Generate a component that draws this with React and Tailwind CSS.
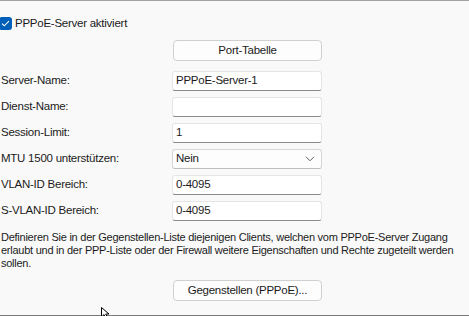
import React from 'react';

const rows = [
  { label: 'Server-Name:', value: 'PPPoE-Server-1' },
  { label: 'Dienst-Name:', value: '' },
  { label: 'Session-Limit:', value: '1' },
  { label: 'MTU 1500 unterstützen:', value: 'Nein', select: true },
  { label: 'VLAN-ID Bereich:', value: '0-4095' },
  { label: 'S-VLAN-ID Bereich:', value: '0-4095' },
];

function Field({ value, select }) {
  if (select) {
    return (
      <div className="w-[150px] h-[20px] flex items-center justify-between pl-[3px] pr-[6px] bg-[#fdfdfd] border border-[#d6d6d6] border-b-[#bdbdbd] rounded-[3px]">
        <span>{value}</span>
        <svg width="10" height="6" viewBox="0 0 10 6" fill="none" stroke="#606060" strokeWidth="1">
          <path d="M1 0.8 L5 4.8 L9 0.8" />
        </svg>
      </div>
    );
  }
  return (
    <div className="w-[150px] h-[20px] flex items-center pl-[3px] bg-white border border-[#e5e5e5] border-b-[#8a8a8a] rounded-[3px]">
      {value}
    </div>
  );
}

function Button({ children }) {
  return (
    <div className="ml-[173px] w-[149px] h-[21px] flex items-center justify-center bg-[#fdfdfd] border border-[#d0d0d0] rounded-[4px]">
      {children}
    </div>
  );
}

export default function App() {
  return (
    <div className="relative w-[469px] h-[316px] overflow-hidden bg-[#f9f9f9] text-[11.5px] tracking-[-0.25px] text-[#1b1b1b] font-['Liberation_Sans',Arial,sans-serif] border-t border-[#a3a3a3]">
      <div className="flex items-center gap-[3px] mt-[16px] h-[13px] -ml-[1px]">
        <div className="w-[13px] h-[13px] rounded-[3px] bg-[#005fb8] flex items-center justify-center">
          <svg width="9" height="7" viewBox="0 0 9 7" fill="none" stroke="white" strokeWidth="1.1">
            <path d="M1 3.6 L3.3 5.8 L8 1.2" />
          </svg>
        </div>
        <span>PPPoE-Server aktiviert</span>
      </div>

      <div className="mt-[10px]">
        <Button>Port-Tabelle</Button>
      </div>

      <div className="mt-[10px] flex flex-col gap-[6px]">
        {rows.map((r) => (
          <div key={r.label} className="flex items-center h-[20px]">
            <div className="w-[172px] pl-[1px]">{r.label}</div>
            <Field value={r.value} select={r.select} />
          </div>
        ))}
      </div>

      <p className="mt-[10px] pl-[1px] text-[11px] leading-[13px] whitespace-nowrap">
        Definieren Sie in der Gegenstellen-Liste diejenigen Clients, welchen vom PPPoE-Server Zugang<br />
        erlaubt und in der PPP-Liste oder der Firewall weitere Eigenschaften und Rechte zugeteilt werden<br />
        sollen.
      </p>

      <div className="mt-[10px]">
        <Button>Gegenstellen (PPPoE)...</Button>
      </div>

      <div className="absolute left-0 right-0 top-[314px] h-[1px] bg-[#7a7a7a]" />

      <svg className="absolute left-[101px] top-[306px]" width="10" height="12" viewBox="0 0 10 12">
        <path d="M0.5 0.5 L0.5 10 L3 7.6 L5 11.5 L6.6 10.8 L4.7 7 L8 7 Z" fill="white" stroke="black" strokeWidth="1" />
      </svg>
    </div>
  );
}
